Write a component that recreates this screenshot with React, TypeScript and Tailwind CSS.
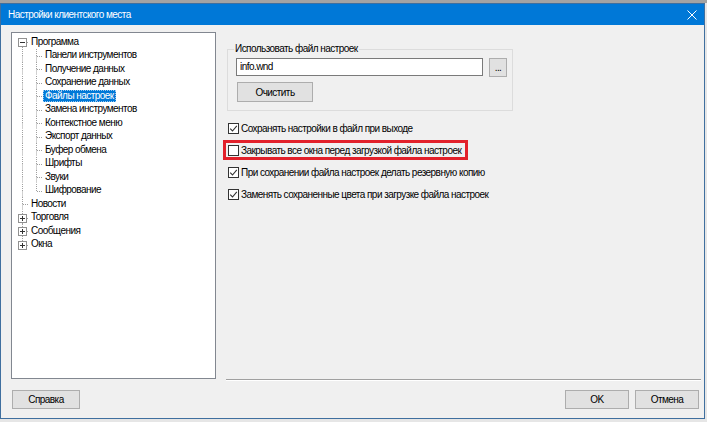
import React from "react";

type Node = {
  label: string;
  level: 0 | 1;
  box?: "minus" | "plus";
  first?: boolean;
  last?: boolean;
  lastChild?: boolean;
  selected?: boolean;
};

const tree: Node[] = [
  { label: "Программа", level: 0, box: "minus", first: true },
  { label: "Панели инструментов", level: 1 },
  { label: "Получение данных", level: 1 },
  { label: "Сохранение данных", level: 1 },
  { label: "Файлы настроек", level: 1, selected: true },
  { label: "Замена инструментов", level: 1 },
  { label: "Контекстное меню", level: 1 },
  { label: "Экспорт данных", level: 1 },
  { label: "Буфер обмена", level: 1 },
  { label: "Шрифты", level: 1 },
  { label: "Звуки", level: 1 },
  { label: "Шифрование", level: 1, lastChild: true },
  { label: "Новости", level: 0 },
  { label: "Торговля", level: 0, box: "plus" },
  { label: "Сообщения", level: 0, box: "plus" },
  { label: "Окна", level: 0, box: "plus", last: true },
];

const LINE = "#a0a0a0";
const H = 13.5;
const MID = 7.5;

function Cell({
  top,
  bottom,
  dash,
  box,
}: {
  top?: boolean;
  bottom?: boolean;
  dash?: boolean;
  box?: "minus" | "plus";
}) {
  return (
    <svg width={14} height={H} className="shrink-0 block">
      {top && (
        <line x1={7.5} y1={0} x2={7.5} y2={box ? 3 : MID} stroke={LINE} strokeDasharray="1 1" />
      )}
      {bottom && (
        <line x1={7.5} y1={box ? 12 : MID} x2={7.5} y2={H} stroke={LINE} strokeDasharray="1 1" />
      )}
      {dash && (
        <line x1={box ? 12 : 8} y1={MID} x2={14} y2={MID} stroke={LINE} strokeDasharray="1 1" />
      )}
      {box && (
        <>
          <rect x={3.5} y={3.5} width={8} height={8} fill="#fff" stroke="#919191" />
          <line x1={5} y1={7.5} x2={10} y2={7.5} stroke="#333" />
          {box === "plus" && <line x1={7.5} y1={5} x2={7.5} y2={10} stroke="#333" />}
        </>
      )}
    </svg>
  );
}

function Check({ checked }: { checked: boolean }) {
  return (
    <div className="w-[11px] h-[11px] border border-[#333] bg-white shrink-0 flex items-center justify-center">
      {checked && (
        <svg width={9} height={9} viewBox="0 0 9 9">
          <polyline points="1.2,4.6 3.5,7 7.8,1.8" fill="none" stroke="#333" strokeWidth={1.1} />
        </svg>
      )}
    </div>
  );
}

function Btn({ children, className }: { children: React.ReactNode; className?: string }) {
  return (
    <div
      className={
        "h-[19px] flex items-center justify-center bg-[#e1e1e1] border border-[#adadad] text-[10px] text-black " +
        (className ?? "")
      }
    >
      {children}
    </div>
  );
}

export default function App() {
  return (
    <div
      className="w-[707px] h-[422px] bg-[#e6e6e6] flex flex-col overflow-hidden tracking-[-0.55px]"
      style={{ fontFamily: "'Liberation Sans', Arial, sans-serif" }}
    >
      <div className="h-[3px] bg-[#a3a3a3] shrink-0" />
      <div className="w-[705px] h-[416px] border border-[#3f6f9f] flex flex-col bg-[#f0f0f0]">
        {/* Title bar */}
        <div className="h-[21px] bg-[#0078d7] flex items-center pl-[7px] pr-[6px] shrink-0">
          <span className="text-white text-[10px] leading-none whitespace-nowrap">Настройки клиентского места</span>
          <div className="flex-1" />
          <svg width={10} height={10} viewBox="0 0 10 10" className="mr-[1px]">
            <line x1={0.5} y1={0.5} x2={9.5} y2={9.5} stroke="#fff" strokeWidth={1} />
            <line x1={9.5} y1={0.5} x2={0.5} y2={9.5} stroke="#fff" strokeWidth={1} />
          </svg>
        </div>

        {/* Main row */}
        <div className="flex mt-[7px] pl-[10px] pr-[3px] h-[347px]">
          {/* Tree */}
          <div className="w-[205px] h-full bg-white border border-[#828790] pt-[2px] pl-[3px] flex flex-col">
            {tree.map((n) => (
              <div key={n.label} className="flex items-center h-[13.5px]">
                {n.level === 0 ? (
                  <Cell top={!n.first} bottom={!n.last} dash box={n.box} />
                ) : (
                  <>
                    <Cell top bottom />
                    <Cell top bottom={!n.lastChild} dash />
                  </>
                )}
                <span
                  className={
                    "px-[2px] h-[12px] flex items-center text-[10px] leading-none whitespace-nowrap " +
                    (n.selected
                      ? "bg-[#0078d7] text-white outline outline-1 outline-dotted outline-[#99c9ef] -outline-offset-1"
                      : "text-black")
                  }
                >
                  {n.label}
                </span>
              </div>
            ))}
          </div>

          {/* Right pane */}
          <div className="ml-[10px] flex-1 flex flex-col">
            <div className="flex-1 pl-[1px] flex flex-col">
              <fieldset className="mt-[10px] w-[285px] h-[69px] border border-[#dcdcdc] pl-[8px] pr-[5px]">
                <legend className="ml-[-2px] px-[1px] text-[10px] leading-[14px] text-black whitespace-nowrap">
                  Использовать файл настроек
                </legend>
                <div className="flex items-center">
                  <div className="w-[247px] h-[18px] bg-white border border-[#7a7a7a] flex items-center pl-[3px] text-[10px] text-black">
                    info.wnd
                  </div>
                  <Btn className="ml-[6px] w-[18px] h-[18px] mt-[2px] text-[9px]">...</Btn>
                </div>
                <Btn className="mt-[5px] ml-[1px] w-[76px] h-[20px]">Очистить</Btn>
              </fieldset>

              <div className="mt-[6px] flex flex-col">
                <div className="h-[22px] flex items-center gap-[2px] pl-[1px]">
                  <Check checked />
                  <span className="text-[10px] text-black whitespace-nowrap">Сохранять настройки в файл при выходе</span>
                </div>
                <div className="h-[22px] flex items-center">
                  <div className="-ml-[4px] w-[245px] h-[20px] border-[3px] border-[#e2212b] flex items-center gap-[2px] pl-[2px]">
                    <Check checked={false} />
                    <span className="text-[10px] text-black whitespace-nowrap">Закрывать все окна перед загрузкой файла настроек</span>
                  </div>
                </div>
                <div className="h-[22px] flex items-center gap-[2px] pl-[1px]">
                  <Check checked />
                  <span className="text-[10px] text-black whitespace-nowrap">При сохранении файла настроек делать резервную копию</span>
                </div>
                <div className="h-[23px] flex items-center gap-[2px] pl-[1px]">
                  <Check checked />
                  <span className="text-[10px] text-black whitespace-nowrap">Заменять сохраненные цвета при загрузке файла настроек</span>
                </div>
              </div>
            </div>
            <div className="h-[2px] border-t border-[#a0a0a0] border-b border-b-white shrink-0 mb-[-2px]" />
          </div>
        </div>

        {/* Buttons */}
        <div className="flex items-center mt-[11px] pl-[11px] pr-[5px]">
          <Btn className="w-[68px]">Справка</Btn>
          <div className="flex-1" />
          <Btn className="w-[64px] border-[#0078d7]">OK</Btn>
          <Btn className="w-[64px] ml-[6px]">Отмена</Btn>
        </div>
      </div>
    </div>
  );
}
